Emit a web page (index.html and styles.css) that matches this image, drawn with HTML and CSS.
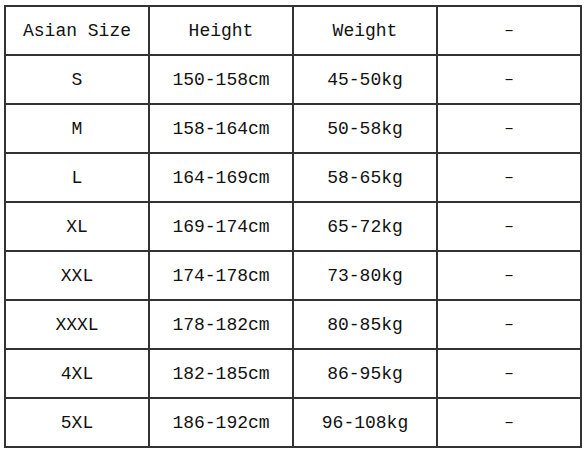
FILE: index.html
```html
<!DOCTYPE html>
<html>
<head>
<meta charset="utf-8">
<link rel="stylesheet" href="styles.css">
</head>
<body>
<table class="size-table">
<tr><td>Asian Size</td><td>Height</td><td>Weight</td><td class="dash">–</td></tr>
<tr><td>S</td><td>150-158cm</td><td>45-50kg</td><td class="dash">–</td></tr>
<tr><td>M</td><td>158-164cm</td><td>50-58kg</td><td class="dash">–</td></tr>
<tr><td>L</td><td>164-169cm</td><td>58-65kg</td><td class="dash">–</td></tr>
<tr><td>XL</td><td>169-174cm</td><td>65-72kg</td><td class="dash">–</td></tr>
<tr><td>XXL</td><td>174-178cm</td><td>73-80kg</td><td class="dash">–</td></tr>
<tr><td>XXXL</td><td>178-182cm</td><td>80-85kg</td><td class="dash">–</td></tr>
<tr><td>4XL</td><td>182-185cm</td><td>86-95kg</td><td class="dash">–</td></tr>
<tr><td>5XL</td><td>186-192cm</td><td>96-108kg</td><td class="dash">–</td></tr>
</table>
</body>
</html>
```
FILE: styles.css
```css
html, body {
  margin: 0;
  padding: 0;
  background: #ffffff;
}
body {
  padding: 5px 0 0 4px;
}
.size-table {
  border-collapse: collapse;
  table-layout: fixed;
  width: 578px;
  font-family: "Liberation Mono", monospace;
  font-size: 18px;
  color: #111111;
}
.size-table td {
  border: 2px solid #333333;
  height: 47px;
  padding: 0;
  text-align: center;
  vertical-align: middle;
}
.size-table td.dash {
  font-size: 16px;
}
```
